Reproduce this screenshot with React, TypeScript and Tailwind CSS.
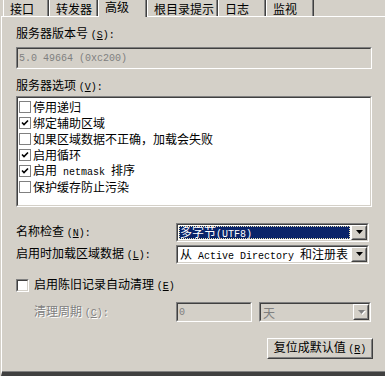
import React from "react";

const M = ({ children, className = "" }: { children: React.ReactNode; className?: string }) => (
  <span className={"whitespace-pre font-['Liberation_Mono',monospace] text-[10px] " + className}>{children}</span>
);

const Sunken = ({ children, className = "", inner = "" }: { children?: React.ReactNode; className?: string; inner?: string }) => (
  <div className={"border border-t-[#808080] border-l-[#808080] border-b-white border-r-white " + className}>
    <div className={"h-full w-full border border-t-[#404040] border-l-[#404040] border-b-[#d4d0c8] border-r-[#d4d0c8] " + inner}>
      {children}
    </div>
  </div>
);

const Raised = ({ children, className = "" }: { children?: React.ReactNode; className?: string }) => (
  <div className={"border border-t-white border-l-white border-b-[#404040] border-r-[#404040] " + className}>
    <div className="flex h-full w-full items-center justify-center border border-t-[#d4d0c8] border-l-[#d4d0c8] border-b-[#808080] border-r-[#808080] bg-[#d4d0c8]">
      {children}
    </div>
  </div>
);

const Arrow = ({ disabled = false }: { disabled?: boolean }) => (
  <svg width="7" height="5" viewBox="0 0 7 5" className={disabled ? "[filter:drop-shadow(1px_1px_0_#fff)]" : ""}>
    <path d="M0 0H7L3.5 4Z" fill={disabled ? "#808080" : "#000"} />
  </svg>
);

const DropBtn = ({ disabled = false }: { disabled?: boolean }) => (
  <Raised className="h-full w-[16px] shrink-0">
    <Arrow disabled={disabled} />
  </Raised>
);

const ListCheck = ({ checked }: { checked: boolean }) => (
  <div className="mr-[2px] flex h-[12px] w-[12px] shrink-0 items-center justify-center border border-[#808080] bg-white">
    {checked && (
      <svg width="8" height="8" viewBox="0 0 8 8">
        <path d="M1 3.5L3 5.5L7 1.5" stroke="#000" strokeWidth="1.6" fill="none" />
      </svg>
    )}
  </div>
);

const tabs = [
  { label: "接口", w: 46 },
  { label: "转发器", w: 49 },
  { label: "高级", w: 49, sel: true },
  { label: "根目录提示", w: 71 },
  { label: "日志", w: 48 },
  { label: "监视", w: 48 },
];

const items: { t: React.ReactNode; c: boolean }[] = [
  { t: "停用递归", c: false },
  { t: "绑定辅助区域", c: true },
  { t: "如果区域数据不正确，加载会失败", c: false },
  { t: "启用循环", c: true },
  {
    t: (
      <>
        启用<M> netmask </M>排序
      </>
    ),
    c: true,
  },
  { t: "保护缓存防止污染", c: false },
];

export default function App() {
  return (
    <div className="relative h-[376px] w-[385px] overflow-hidden bg-[#d4d0c8] font-['Noto_Sans_CJK_SC',sans-serif] text-[12px] text-black">
      {/* tabs */}
      <div className="flex h-[16px] pl-[3px]">
        {tabs.map((t) =>
          t.sel ? (
            <div
              key={t.label}
              style={{ width: t.w }}
              className="relative z-10 -mb-px h-[17px] border-l border-white bg-[#d4d0c8] pl-[6px] pt-[1px] leading-[12px] shadow-[inset_-1px_0_0_#808080] border-r border-r-[#404040]"
            >
              {t.label}
            </div>
          ) : (
            <div
              key={t.label}
              style={{ width: t.w }}
              className="h-[16px] border-l border-white pl-[6px] pt-[2px] leading-[14px] shadow-[inset_-1px_0_0_#808080] border-r border-r-[#404040]"
            >
              {t.label}
            </div>
          )
        )}
      </div>

      {/* panel */}
      <div className="ml-px h-[360px] border-l border-t border-white border-b-4 border-b-[#404040] pl-[14px] shadow-[inset_0_-1px_0_#808080]">
        <div className="mt-[8px] h-[16px] leading-[16px]">
          服务器版本号 <M>(<u>S</u>):</M>
        </div>
        <Sunken className="mt-[6px] h-[22px] w-[356px]" inner="flex items-center pl-[1px] bg-[#d4d0c8]">
          <M className="text-[#808080]">5.0 49664 (0xc200)</M>
        </Sunken>

        <div className="mt-[8px] h-[16px] leading-[16px]">
          服务器选项 <M>(<u>V</u>):</M>
        </div>
        <Sunken className="mt-[3px] h-[111px] w-[356px]" inner="bg-white pt-[1px]">
          {items.map((it, i) => (
            <div key={i} className="flex h-[16px] items-center pl-[1px] leading-[16px]">
              <ListCheck checked={it.c} />
              <span>{it.t}</span>
            </div>
          ))}
        </Sunken>

        <div className="mt-[16px] flex h-[19px] items-center">
          <div className="w-[160px] leading-[16px]">
            名称检查 <M>(<u>N</u>):</M>
          </div>
          <Sunken className="h-[19px] w-[193px]" inner="flex bg-white">
            <div className="m-[1px] flex flex-1 items-center bg-[#0a246a] pl-[1px] text-white outline-1 outline-dotted outline-[#e8e0b0] -outline-offset-1 leading-[13px]">
              <span>
                多字节<M>(UTF8)</M>
              </span>
            </div>
            <DropBtn />
          </Sunken>
        </div>

        <div className="mt-[3px] flex h-[19px] items-center">
          <div className="w-[160px] leading-[16px]">
            启用时加载区域数据 <M>(<u>L</u>):</M>
          </div>
          <Sunken className="h-[19px] w-[193px]" inner="flex bg-white">
            <div className="flex flex-1 items-center whitespace-nowrap pl-[2px] leading-[13px]">
              <span>
                从<M> Active Directory </M>和注册表
              </span>
            </div>
            <DropBtn />
          </Sunken>
        </div>

        <div className="mt-[13px] flex h-[16px] items-center">
          <Sunken className="h-[13px] w-[13px]" inner="bg-white" />
          <span className="ml-[5px] leading-[16px]">
            启用陈旧记录自动清理 <M>(<u>E</u>)</M>
          </span>
        </div>

        <div className="mt-[9px] flex h-[20px] items-center">
          <div className="ml-[18px] w-[142px] leading-[16px] text-[#808080] [text-shadow:1px_1px_0_#fff]">
            清理周期 <M>(<u>C</u>):</M>
          </div>
          <Sunken className="h-[20px] w-[76px]" inner="flex items-center bg-[#d4d0c8] pl-[1px]">
            <M className="text-[#808080]">0</M>
          </Sunken>
          <Sunken className="ml-[7px] h-[20px] w-[112px]" inner="flex bg-[#d4d0c8]">
            <div className="flex flex-1 items-center pl-[2px] leading-[15px] text-[#808080]">天</div>
            <DropBtn disabled />
          </Sunken>
        </div>

        <div className="mt-[16px] flex justify-end pr-[12px]">
          <Raised className="h-[21px] w-[106px]">
            <span className="leading-[16px]">
              复位成默认值 <M>(<u>R</u>)</M>
            </span>
          </Raised>
        </div>
      </div>
    </div>
  );
}
